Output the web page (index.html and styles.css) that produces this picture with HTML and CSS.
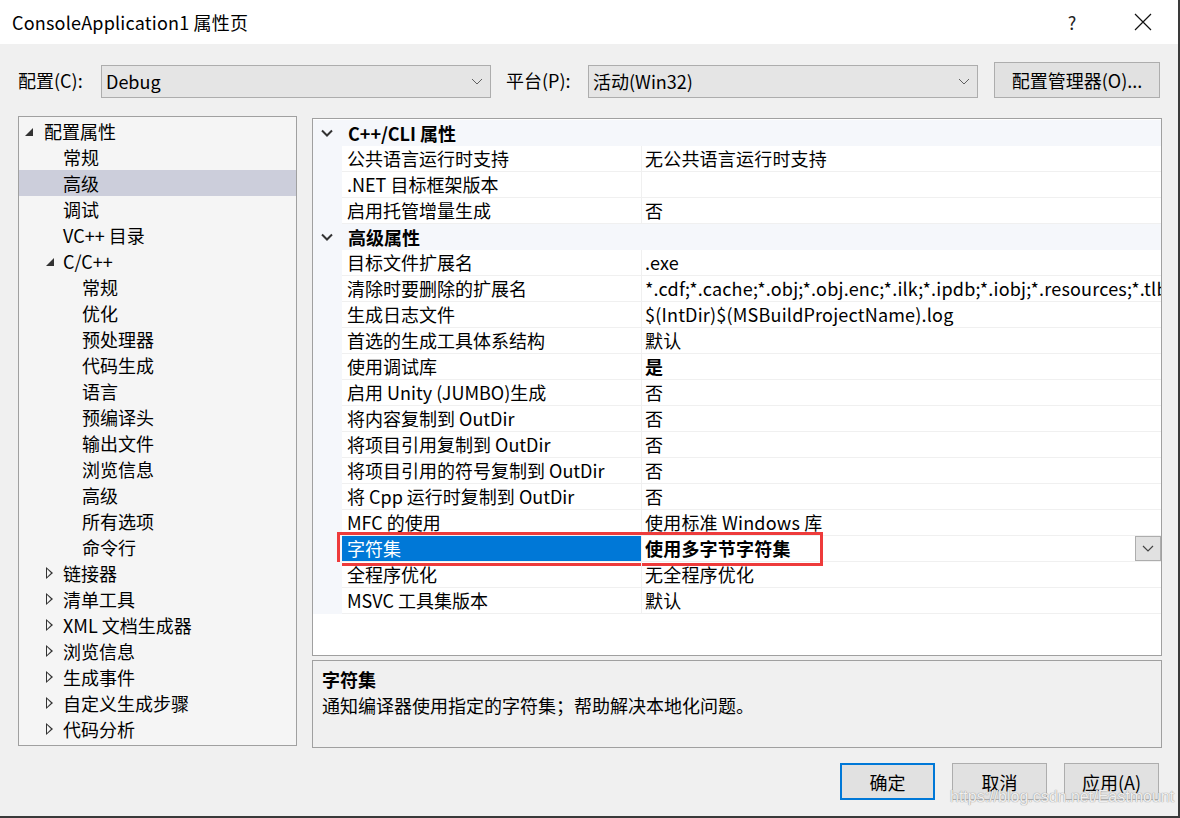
FILE: index.html
```html
<!DOCTYPE html>
<html lang="zh-CN">
<head>
    <meta charset="UTF-8">
    <title>ConsoleApplication1 属性页</title>
    <link rel="stylesheet" href="styles.css">
</head>
<body>
<div class="window">
    <div class="titlebar">
        <div class="title">ConsoleApplication1 属性页</div>
        <div class="title-help">?</div>
        <div class="title-close">
            <svg width="18" height="18" viewBox="0 0 18 18"><path d="M1 1 L17 17 M17 1 L1 17" stroke="#111" stroke-width="1.2" fill="none"/></svg>
        </div>
    </div>

    <div class="config-row">
        <div class="config-label">配置(C):</div>
        <div class="combo">
            <span>Debug</span>
            <svg class="combo-arrow" width="12" height="7" viewBox="0 0 12 7"><path d="M1 1 L6 6 L11 1" stroke="#606060" stroke-width="1" fill="none"/></svg>
        </div>
        <div class="config-label platform-label">平台(P):</div>
        <div class="combo">
            <span>活动(Win32)</span>
            <svg class="combo-arrow" width="12" height="7" viewBox="0 0 12 7"><path d="M1 1 L6 6 L11 1" stroke="#606060" stroke-width="1" fill="none"/></svg>
        </div>
        <button class="btn manager-btn">配置管理器(O)...</button>
    </div>

    <div class="main">
        <div class="tree">
            <div class="tree-item lvl0"><span class="tw open"></span>配置属性</div>
            <div class="tree-item lvl1">常规</div>
            <div class="tree-item lvl1 selected">高级</div>
            <div class="tree-item lvl1">调试</div>
            <div class="tree-item lvl1">VC++ 目录</div>
            <div class="tree-item lvl1"><span class="tw open"></span>C/C++</div>
            <div class="tree-item lvl2">常规</div>
            <div class="tree-item lvl2">优化</div>
            <div class="tree-item lvl2">预处理器</div>
            <div class="tree-item lvl2">代码生成</div>
            <div class="tree-item lvl2">语言</div>
            <div class="tree-item lvl2">预编译头</div>
            <div class="tree-item lvl2">输出文件</div>
            <div class="tree-item lvl2">浏览信息</div>
            <div class="tree-item lvl2">高级</div>
            <div class="tree-item lvl2">所有选项</div>
            <div class="tree-item lvl2">命令行</div>
            <div class="tree-item lvl1"><span class="tw closed"></span>链接器</div>
            <div class="tree-item lvl1"><span class="tw closed"></span>清单工具</div>
            <div class="tree-item lvl1"><span class="tw closed"></span>XML 文档生成器</div>
            <div class="tree-item lvl1"><span class="tw closed"></span>浏览信息</div>
            <div class="tree-item lvl1"><span class="tw closed"></span>生成事件</div>
            <div class="tree-item lvl1"><span class="tw closed"></span>自定义生成步骤</div>
            <div class="tree-item lvl1"><span class="tw closed"></span>代码分析</div>
        </div>

        <div class="right">
            <div class="grid">
                <div class="cat-row">
                    <div class="margin"><svg width="12" height="8" viewBox="0 0 12 8"><path d="M1 1.5 L6 6.5 L11 1.5" stroke="#333" stroke-width="2" fill="none"/></svg></div>
                    <div class="cat-name">C++/CLI 属性</div>
                </div>
                <div class="prop-row"><div class="margin"></div><div class="name">公共语言运行时支持</div><div class="value">无公共语言运行时支持</div></div>
                <div class="prop-row"><div class="margin"></div><div class="name">.NET 目标框架版本</div><div class="value"></div></div>
                <div class="prop-row"><div class="margin"></div><div class="name">启用托管增量生成</div><div class="value">否</div></div>
                <div class="cat-row">
                    <div class="margin"><svg width="12" height="8" viewBox="0 0 12 8"><path d="M1 1.5 L6 6.5 L11 1.5" stroke="#333" stroke-width="2" fill="none"/></svg></div>
                    <div class="cat-name">高级属性</div>
                </div>
                <div class="prop-row"><div class="margin"></div><div class="name">目标文件扩展名</div><div class="value">.exe</div></div>
                <div class="prop-row"><div class="margin"></div><div class="name">清除时要删除的扩展名</div><div class="value">*.cdf;*.cache;*.obj;*.obj.enc;*.ilk;*.ipdb;*.iobj;*.resources;*.tlb;*.tli;*.tlh;*.tmp</div></div>
                <div class="prop-row"><div class="margin"></div><div class="name">生成日志文件</div><div class="value">$(IntDir)$(MSBuildProjectName).log</div></div>
                <div class="prop-row"><div class="margin"></div><div class="name">首选的生成工具体系结构</div><div class="value">默认</div></div>
                <div class="prop-row"><div class="margin"></div><div class="name">使用调试库</div><div class="value bold">是</div></div>
                <div class="prop-row"><div class="margin"></div><div class="name">启用 Unity (JUMBO)生成</div><div class="value">否</div></div>
                <div class="prop-row"><div class="margin"></div><div class="name">将内容复制到 OutDir</div><div class="value">否</div></div>
                <div class="prop-row"><div class="margin"></div><div class="name">将项目引用复制到 OutDir</div><div class="value">否</div></div>
                <div class="prop-row"><div class="margin"></div><div class="name">将项目引用的符号复制到 OutDir</div><div class="value">否</div></div>
                <div class="prop-row"><div class="margin"></div><div class="name">将 Cpp 运行时复制到 OutDir</div><div class="value">否</div></div>
                <div class="prop-row"><div class="margin"></div><div class="name">MFC 的使用</div><div class="value">使用标准 Windows 库</div></div>
                <div class="prop-row active">
                    <div class="margin"></div>
                    <div class="name">字符集</div>
                    <div class="value bold">使用多字节字符集
                        <div class="drop-btn"><svg width="12" height="7" viewBox="0 0 12 7"><path d="M1 1 L6 6 L11 1" stroke="#444" stroke-width="1.2" fill="none"/></svg></div>
                    </div>
                    <div class="highlight-box"></div>
                </div>
                <div class="prop-row"><div class="margin"></div><div class="name">全程序优化</div><div class="value">无全程序优化</div></div>
                <div class="prop-row"><div class="margin"></div><div class="name">MSVC 工具集版本</div><div class="value">默认</div></div>
            </div>
            <div class="desc">
                <div class="desc-title">字符集</div>
                <div class="desc-text">通知编译器使用指定的字符集；帮助解决本地化问题。</div>
            </div>
        </div>
    </div>

    <div class="footer">
        <button class="btn footer-btn default">确定</button>
        <button class="btn footer-btn">取消</button>
        <button class="btn footer-btn">应用(A)</button>
    </div>

    <div class="watermark">https://blog.csdn.net/Eastmount</div>
</div>
</body>
</html>
```

FILE: styles.css
```css
* {
    box-sizing: border-box;
}

body {
    margin: 0;
    padding: 0;
    font-family: "Noto Sans CJK SC", "Noto Sans", sans-serif;
    font-size: 18px;
    color: #000;
    background-color: #f0f0f0;
}

.window {
    position: relative;
    width: 1180px;
    height: 818px;
    background-color: #f0f0f0;
    border-right: 2px solid #3a3a3a;
    border-bottom: 2px solid #3a3a3a;
    overflow: hidden;
}

.titlebar {
    height: 44px;
    background-color: #ffffff;
    display: flex;
    align-items: center;
}

.title {
    flex-grow: 1;
    padding-left: 12px;
    line-height: 44px;
    letter-spacing: 0.2px;
}

.title-help {
    width: 20px;
    text-align: center;
    margin-right: 52px;
    color: #222;
}

.title-close {
    width: 18px;
    height: 18px;
    margin-right: 26px;
    display: flex;
}

.config-row {
    display: flex;
    align-items: center;
    height: 36px;
    margin-top: 18px;
    padding-left: 18px;
}

.config-label {
    width: 83px;
    line-height: 26px;
}

.platform-label {
    width: 82px;
    margin-left: 15px;
}

.combo {
    width: 390px;
    height: 33px;
    margin-top: 2px;
    background-color: #e5e5e5;
    border: 1px solid #adadad;
    display: flex;
    align-items: center;
    justify-content: space-between;
    padding: 0 7px 0 4px;
    line-height: 26px;
}

.btn {
    font-family: "Noto Sans CJK SC", "Noto Sans", sans-serif;
    font-size: 18px;
    background-color: #e1e1e1;
    border: 1px solid #adadad;
    color: #000;
    padding: 0;
    line-height: 26px;
}

.manager-btn {
    width: 166px;
    height: 36px;
    margin-left: 16px;
}

.main {
    display: flex;
    align-items: flex-start;
    margin-top: 18px;
    padding-left: 18px;
    gap: 15px;
}

.tree {
    width: 279px;
    height: 630px;
    background-color: #f5f5f5;
    border: 1px solid #a0a0a0;
    padding-top: 1px;
}

.tree-item {
    position: relative;
    height: 26px;
    line-height: 26px;
    white-space: nowrap;
}

.tree-item.selected {
    background-color: #cccedb;
}

.lvl0 {
    padding-left: 25px;
}

.lvl1 {
    padding-left: 44px;
}

.lvl2 {
    padding-left: 63px;
}

.tw {
    position: absolute;
    top: 9px;
}

.lvl0 .tw {
    left: 6px;
}

.lvl1 .tw {
    left: 27px;
}

.tw.open {
    width: 0;
    height: 0;
    border-left: 8px solid transparent;
    border-bottom: 8px solid #333;
    top: 10px;
}

.tw.closed {
    width: 0;
    height: 0;
    border-top: 6px solid transparent;
    border-bottom: 6px solid transparent;
    border-left: 7px solid #333;
    top: 7px;
}

.tw.closed::after {
    content: "";
    position: absolute;
    left: -6px;
    top: -4px;
    border-top: 4px solid transparent;
    border-bottom: 4px solid transparent;
    border-left: 4px solid #f5f5f5;
}

.right {
    width: 850px;
    margin-top: 2px;
}

.grid {
    height: 538px;
    background-color: #ffffff;
    border: 1px solid #a0a0a0;
    padding-top: 1px;
}

.cat-row {
    display: flex;
    height: 26px;
    background-color: #f5f7fb;
}

.margin {
    width: 29px;
    flex-shrink: 0;
    background-color: #f5f7fb;
    display: flex;
    align-items: center;
    justify-content: center;
    padding-right: 2px;
}

.cat-name {
    font-weight: bold;
    line-height: 26px;
    padding-left: 6px;
}

.prop-row {
    position: relative;
    display: flex;
    height: 26px;
}

.name {
    width: 299px;
    flex-shrink: 0;
    line-height: 25px;
    padding-left: 5px;
    border-bottom: 1px solid #f0f0f0;
    white-space: nowrap;
    overflow: hidden;
}

.value {
    position: relative;
    flex-grow: 1;
    line-height: 25px;
    padding-left: 3px;
    border-left: 1px solid #f0f0f0;
    border-bottom: 1px solid #f0f0f0;
    white-space: nowrap;
    overflow: hidden;
    letter-spacing: 0.2px;
}

.bold {
    font-weight: bold;
}

.prop-row.active .name {
    background-color: #0078d7;
    color: #ffffff;
}

.drop-btn {
    position: absolute;
    right: 0;
    top: 0;
    width: 26px;
    height: 25px;
    background-color: #e1e1e1;
    border: 1px solid #adadad;
    display: flex;
    align-items: center;
    justify-content: center;
}

.highlight-box {
    position: absolute;
    left: 24px;
    top: -4px;
    width: 486px;
    height: 34px;
    border: 3px solid #ee3b3b;
}

.desc {
    height: 88px;
    margin-top: 4px;
    border: 1px solid #a0a0a0;
    background-color: #f0f0f0;
    padding: 5px 9px;
}

.desc-title {
    font-weight: bold;
    line-height: 26px;
}

.desc-text {
    line-height: 26px;
}

.footer {
    display: flex;
    justify-content: flex-end;
    gap: 17px;
    margin-top: 15px;
    padding-right: 19px;
}

.footer-btn {
    width: 95px;
    height: 37px;
}

.footer-btn.default {
    border: 2px solid #0078d7;
}

.watermark {
    position: absolute;
    left: 950px;
    top: 788px;
    font-family: "Liberation Sans", sans-serif;
    font-size: 16px;
    color: rgba(255, 255, 255, 0.85);
    text-shadow: 0 0 1px #9a9a9a, 0 0 1px #9a9a9a;
}
```
